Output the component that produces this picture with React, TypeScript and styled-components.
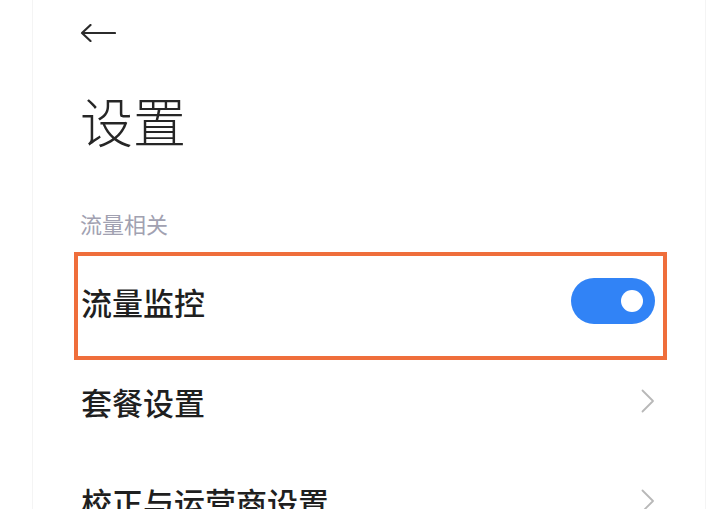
import React from "react";
import styled, { createGlobalStyle } from "styled-components";

const GlobalStyle = createGlobalStyle`
  html, body {
    margin: 0;
    background: #ffffff;
    font-family: "Noto Sans CJK SC", "Noto Sans", sans-serif;
  }
`;

const App: React.FC = () => {
  return (
    <>
      <GlobalStyle />
      <Panel>
        <Header>
          <BackButton aria-label="返回">
            <svg width="36" height="18" viewBox="0 0 36 18" fill="none">
              <path d="M2 9H35M10.5 1L2 9L10.5 17" stroke="#2b2b2b" strokeWidth="2.2" strokeLinecap="round" strokeLinejoin="round" />
            </svg>
          </BackButton>
        </Header>
        <Title>设置</Title>
        <SectionLabel>流量相关</SectionLabel>
        <List>
          {items.map((item) => (
            <Row key={item.label}>
              <RowLabel>{item.label}</RowLabel>
              {item.kind === "toggle" ? (
                <Toggle on>
                  <Knob />
                </Toggle>
              ) : (
                <svg width="14" height="24" viewBox="0 0 14 24" fill="none">
                  <path d="M1.5 1.5L12 12L1.5 22.5" stroke="#b8b8b8" strokeWidth="1.8" strokeLinecap="round" strokeLinejoin="round" />
                </svg>
              )}
              {item.highlighted && <Highlight />}
            </Row>
          ))}
        </List>
      </Panel>
    </>
  );
};

export default App;

const items = [
  { label: "流量监控", kind: "toggle", highlighted: true },
  { label: "套餐设置", kind: "link", highlighted: false },
  { label: "校正与运营商设置", kind: "link", highlighted: false },
];

const Panel = styled.div`
  margin-left: 32px;
  width: 674px;
  height: 100vh;
  box-sizing: border-box;
  padding-left: 47px;
  border-left: 1px solid #f4f4f4;
  border-right: 1px solid #f4f4f4;
  overflow: hidden;
`;

const Header = styled.div`
  height: 66px;
  display: flex;
  align-items: center;
`;

const BackButton = styled.div`
  display: flex;
  align-items: center;
  width: 36px;
  height: 18px;
`;

const Title = styled.h1`
  margin: 28px 0 0;
  font-size: 53px;
  line-height: 53px;
  font-weight: 300;
  color: #262626;
`;

const SectionLabel = styled.div`
  margin-top: 65px;
  font-size: 22px;
  line-height: 22px;
  color: #a1a1b1;
`;

const List = styled.div`
  margin: 17px 0 0 -6px;
  width: 593px;
`;

const Row = styled.div`
  position: relative;
  height: 100px;
  display: flex;
  align-items: center;
  justify-content: space-between;
  padding: 0 12px 0 7px;
  box-sizing: border-box;
`;

const RowLabel = styled.div`
  font-size: 31px;
  line-height: 31px;
  font-weight: 500;
  color: #1f1f1f;
`;

const Toggle = styled.div<{ on?: boolean }>`
  width: 84px;
  height: 46px;
  border-radius: 23px;
  background: ${({ on }) => (on ? "#3183f6" : "#d9d9d9")};
  display: flex;
  align-items: center;
  justify-content: ${({ on }) => (on ? "flex-end" : "flex-start")};
  padding: 0 12px;
  box-sizing: border-box;
`;

const Knob = styled.div`
  width: 22px;
  height: 22px;
  border-radius: 50%;
  background: #ffffff;
`;

const Highlight = styled.div`
  position: absolute;
  top: 1px;
  left: 0;
  right: 0;
  bottom: -9px;
  border: 4px solid #ef6e3b;
  pointer-events: none;
`;
